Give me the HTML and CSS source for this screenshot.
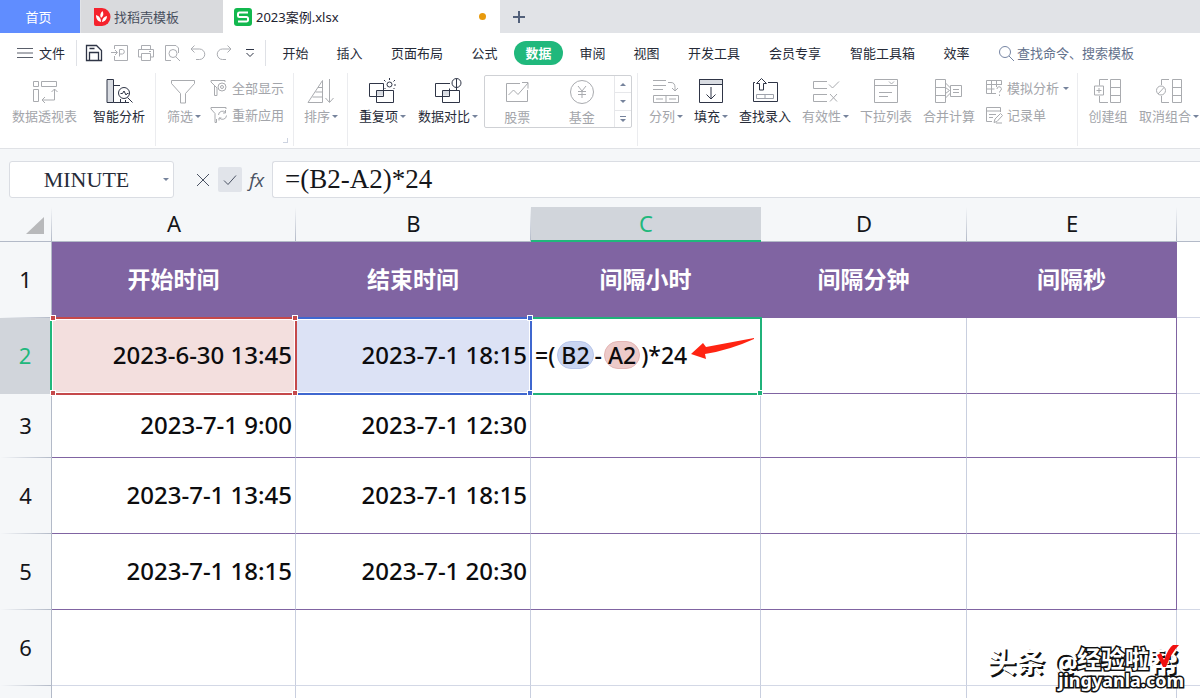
FILE: index.html
```html
<!DOCTYPE html>
<html lang="zh-CN">
<head>
<meta charset="utf-8">
<title>2023案例.xlsx</title>
<link rel="stylesheet" href="styles.css">
</head>
<body>
<div class="app">
  <nav class="tabs">
    <button class="tab tab-home">首页</button>
    <button class="tab tab-template">
      <svg width="18" height="18" viewBox="0 0 18 18"><path d="M1 0h8a8.500 9 0 0 1 0 18H3a2 2 0 0 1-2-2z" fill="#f5222d"/><path d="M8 14C4 13 3 10 3 7c3 1 5 3 5 7zM8 10C6.500 7 7.500 5 9.500 3c1.500 3 1 5-1.500 7zM9 14c0-3 2-5.500 5-6 0 3-2 5.500-5 6z" fill="#fff"/></svg>
      找稻壳模板
    </button>
    <button class="tab tab-file">
      <svg width="18" height="18" viewBox="0 0 18 18"><rect width="18" height="18" rx="3" fill="#12b84e"/><path d="M14 4.500H5.500a1.500 1.500 0 0 0-1.500 1.500v1.500A1.500 1.500 0 0 0 5.500 9h7A1.500 1.500 0 0 1 14 10.500V12a1.500 1.500 0 0 1-1.500 1.500H4" fill="none" stroke="#fff" stroke-width="2"/></svg>
      <span class="tab-name">2023案例.xlsx</span>
      <span class="unsaved"></span>
    </button>
    <button class="new-tab" aria-label="新建"><svg width="14" height="14" viewBox="0 0 14 14"><path d="M7 1v12M1 7h12" stroke="#52607a" stroke-width="2"/></svg></button>
  </nav>

  <div class="menu">
    <button class="file-menu"><svg width="16" height="12" viewBox="0 0 16 12"><path d="M0 1.500h16M0 6h16M0 10.500h16" stroke="#5a5f6a"/></svg>文件</button>
    <div class="quick">
      <button aria-label="保存"><svg class="dark" width="18" height="18" viewBox="0 0 18 18"><path d="M1.500 16.500v-15h10l5 5v10zM4.500 16.500V8.500h9v8M4.500 4.500h5" stroke-width="1.300"/></svg></button>
      <button aria-label="输出为PDF"><svg width="18" height="18" viewBox="0 0 18 18"><path d="M3.500 5V1.500h13v15h-13V12M0 8.500h6M4 6l2.500 2.500L4 11M8.500 12.500v-7h3a2.300 2.300 0 0 1 0 4.500H8.500"/></svg></button>
      <button aria-label="打印"><svg width="18" height="18" viewBox="0 0 18 18"><path d="M4.500 5.500v-4h9v4M4.500 13H1.500V5.500h15V13h-3M4.500 9.500h9v7h-9zM12 7.500h2"/></svg></button>
      <button aria-label="打印预览"><svg width="18" height="18" viewBox="0 0 18 18"><path d="M8 16.500H2.500v-15H13l2.500 2.500v5M13 13l4 4"/><circle cx="10" cy="9.500" r="4"/></svg></button>
      <button aria-label="撤销"><svg width="18" height="18" viewBox="0 0 18 18"><path d="M5.500 1.500L2 5l3.500 3.500M2 5h8.500a5.200 5.200 0 0 1 0 10.500H7"/></svg></button>
      <button aria-label="恢复"><svg width="18" height="18" viewBox="0 0 18 18"><path d="M12.500 1.500L16 5l-3.500 3.500M16 5H7.500a5.200 5.200 0 0 0 0 10.500H11"/></svg></button>
      <button aria-label="更多"><svg class="dark" width="18" height="18" viewBox="0 0 18 18"><path d="M5 5.500h8M5.500 9L9 12.500 12.500 9"/></svg></button>
    </div>
    <div class="menu-items">
      <button class="c2">开始</button><button class="c2">插入</button><button class="c4">页面布局</button><button class="c2">公式</button><button class="c2 active">数据</button><button class="c2">审阅</button><button class="c2">视图</button><button class="c4">开发工具</button><button class="c4">会员专享</button><button class="c5">智能工具箱</button><button class="c2">效率</button>
    </div>
    <button class="search"><svg width="17" height="17" viewBox="0 0 17 17"><circle cx="7" cy="7" r="5.500"/><path d="M11 11l5 5"/></svg>查找命令、搜索模板</button>
  </div>

  <div class="ribbon">
    <div class="group g-first">
      <button class="tool c5 off"><svg width="28" height="28" viewBox="0 0 28 28"><path d="M2.500 4.500h5v5h-5zM10.500 4.500h15v5h-15zM2.500 12.500h5v12h-5zM23.500 12v11H11M20.500 15l3-3 3 3M14 20l-3 3 3 3"/></svg><span>数据透视表</span></button>
      <button class="tool c4"><svg width="28" height="28" viewBox="0 0 28 28"><path d="M2 2.500h6.500v23H2z" fill="#d9dce2"/><path d="M8.500 8.500H15M8.500 25.500H24M15.500 22v3.500M20.500 23v2.500M22.500 20.500l5 5M15.500 16.500h2l1.500-2.500 2 4 1-1.500h1.500"/><circle cx="19" cy="16" r="5.500"/></svg><span>智能分析</span></button>
    </div>
    <div class="group g-filter">
      <button class="tool t2 off"><svg width="28" height="28" viewBox="0 0 28 28"><path d="M1.500 3.500h23v3l-9 10v9.500h-5v-9.500l-9-10z"/></svg><span>筛选<i class="caret"></i></span></button>
      <div class="stack">
        <button class="small off"><svg width="18" height="18" viewBox="0 0 18 18"><path d="M7 16.500V9L1 3V1.500h14V3M7 16.500H4.500V6.500"/><circle cx="12" cy="8" r="4"/><circle cx="12" cy="8" r="1.500"/></svg>全部显示</button>
        <button class="small off"><svg width="18" height="18" viewBox="0 0 18 18"><path d="M6.500 16.500V13M1 3V1.500h15V3M1 3l4 4.500v9h1.500M8.500 9a4 4 0 0 1 7-2.500M16.500 9.500a4 4 0 0 1-7 2.500M15.500 4v3H13M9 14.500V12h2.500"/></svg>重新应用</button>
      </div>
      <span class="launcher"></span>
    </div>
    <div class="group g-sort">
      <button class="tool t2 off"><svg width="28" height="28" viewBox="0 0 28 28"><path d="M1 25.500L15.500 3.500v22zM11 10.500h4.500M8.500 15h7M5.500 20h10M22.500 2v23M18.500 21l4 4.500 4-4.500"/></svg><span>排序<i class="caret"></i></span></button>
    </div>
    <div class="group g-data">
      <button class="tool t3"><svg width="28" height="28" viewBox="0 0 28 28"><path d="M7.500 13.500h7v5h-7z" fill="#d9dce2" stroke="none"/><path d="M.5 6.500h14v13H.5zM7.500 13.500h17v12h-17z"/><circle cx="20.500" cy="7.500" r="2.500"/><path d="M20.500 1v2M15 3l1.500 1.500M26 3l-1.500 1.500M25 8h2M15.500 12l1-1M25.500 12l-1-1"/></svg><span>重复项<i class="caret"></i></span></button>
      <button class="tool t4"><svg width="28" height="28" viewBox="0 0 28 28"><path d="M8.500 13.500h7v5h-7z" fill="#d9dce2" stroke="none"/><path d="M16 6.500H1.500v13h14v-8M8.500 13.500h17v12h-17zM22.500 1.500v11M22.500 13v-2"/><circle cx="22.500" cy="6" r="4.500"/></svg><span>数据对比<i class="caret"></i></span></button>
      <div class="gallery">
        <button class="tool off"><svg width="28" height="28" viewBox="0 0 28 28"><path d="M17 5.500H3.500v18h21V12M5.500 17l5-5 4.500 4.500L25 5M19 4.500h6v6"/></svg><span>股票</span></button>
        <button class="tool off"><svg width="28" height="28" viewBox="0 0 28 28"><circle cx="14" cy="14" r="11.500"/><path d="M10 8l4 5 4-5M14 13v7M10 13.500h8M10 16.500h8"/></svg><span>基金</span></button>
        <div class="gallery-nav"><button aria-label="上一行"><i class="caret up"></i></button><button aria-label="下一行"><i class="caret"></i></button><button class="more" aria-label="展开"><i class="caret"></i></button></div>
      </div>
    </div>
    <div class="group g-tools">
      <button class="tool t2 off"><svg width="28" height="28" viewBox="0 0 28 28"><path d="M1 3.500h13M1 8.500h13M1 12.500h10M16 5.500h3q4 0 4 5v3M20 11l3 3 3-3M1.500 18.500h25v7h-25zM14 18.500v7M4 22h7M17 22h7"/></svg><span>分列<i class="caret"></i></span></button>
      <button class="tool t2"><svg width="28" height="28" viewBox="0 0 28 28"><path d="M2.500 2.500h23v5h-23z" fill="#d9dce2"/><path d="M2.500 2.500h23v23h-23zM14 10v12M9.500 17.500L14 22l4.500-4.500"/></svg><span>填充<i class="caret"></i></span></button>
      <button class="tool c4"><svg width="28" height="28" viewBox="0 0 28 28"><path d="M4 5.500H2.500v19h24v-19H17"/><path d="M8.500 13V6.500H5.500L10.500 1.500l5 5h-3V13z"/><path d="M5.500 17.500h17v4h-17zM14 17.500v4" stroke="#9ea2ab"/></svg><span>查找录入</span></button>
      <button class="tool t3 off"><svg width="28" height="28" viewBox="0 0 28 28"><path d="M15 4.500H1.500v7H15M15 17.500H1.500v7H15M17 7.500l3.500 3.500L27 4.500M18 17l7 7.500M25 17l-7 7.500"/></svg><span>有效性<i class="caret"></i></span></button>
      <button class="tool c4 off"><svg width="28" height="28" viewBox="0 0 28 28"><path d="M2.500 2.500h23v23h-23zM2.500 8.500h23M17 4.500l2.500 2.500L22 4.500M7 15.500h13M7 19.500h9"/></svg><span>下拉列表</span></button>
      <button class="tool c4 off"><svg width="28" height="28" viewBox="0 0 28 28"><path d="M.5 2.500h10v23H.5zM.5 10.500h10M.5 18.500h10M10.500 6l5 5M10.500 21l5-5M10.500 10.500l4 3-4 3M15.500 8.500h11v11h-11zM18 12.500h6M18 15.500h6"/></svg><span>合并计算</span></button>
      <div class="stack stack-wide">
        <button class="small off"><svg width="18" height="18" viewBox="0 0 18 18"><path d="M11 14.500H1.500v-13h15V6M1.500 5.500h15M1.500 10h8M6.500 1.500v13M11.500 1.500V8M12 10a2.200 2.200 0 1 1 3 2l-.5 1.500M14.500 15.500v1.500"/></svg>模拟分析<i class="caret"></i></button>
        <button class="small off"><svg width="18" height="18" viewBox="0 0 18 18"><path d="M7 15.500H1.500v-14h14V6M1.500 5h14M4 8.500h7M4 11.500h4M9 16.500l1-3.500L15.500 7.500l2 2L12 15.500zM11 17h6"/></svg>记录单</button>
      </div>
    </div>
    <div class="group g-outline">
      <button class="tool c3 off"><svg width="28" height="28" viewBox="0 0 28 28"><path d="M14 2.500H5.500v6M5.500 19v6.500H14M.5 9h9v9h-9zM5 11v5M2.500 13.500h5M16.500 2.500h10v23h-10zM16.500 10.500h10M16.500 18.500h10"/></svg><span>创建组</span></button>
      <button class="tool t4 off"><svg width="28" height="28" viewBox="0 0 28 28"><path d="M14 2.500H6.500v5.500M6.500 19v6.500H14M3 17l6-6.500M17.500 2.500h9v23h-9zM17.500 10.500h9M17.500 18.500h9"/><circle cx="6" cy="13.500" r="4.500"/></svg><span>取消组合<i class="caret"></i></span></button>
    </div>
  </div>

  <div class="formula-bar">
    <div class="name-box"><input type="text" value="MINUTE" aria-label="名称框"><button aria-label="名称列表"><i class="caret"></i></button></div>
    <div class="formula-actions">
      <button aria-label="取消"><svg width="14" height="14" viewBox="0 0 14 14"><path d="M1 1l12 12M13 1L1 13"/></svg></button>
      <button class="confirm" aria-label="输入"><svg width="14" height="14" viewBox="0 0 14 14"><path d="M1 7.500L5 11.500 13 2.500"/></svg></button>
      <button class="fx" aria-label="插入函数">fx</button>
    </div>
    <input class="formula" type="text" value="=(B2-A2)*24" aria-label="编辑栏">
  </div>

  <main class="sheet">
    <table>
      <colgroup><col class="col-n"><col class="col-a"><col class="col-b"><col class="col-c"><col class="col-d"><col class="col-e"><col></colgroup>
      <thead>
        <tr><th class="corner"><svg width="18" height="17" viewBox="0 0 18 17"><path d="M18 0v17H0z" fill="#b8b9bb"/></svg></th><th>A</th><th>B</th><th class="current">C</th><th>D</th><th>E</th><th></th></tr>
      </thead>
      <tbody>
        <tr class="title"><th>1</th><td>开始时间</td><td>结束时间</td><td>间隔小时</td><td>间隔分钟</td><td>间隔秒</td><td></td></tr>
        <tr><th class="current">2</th><td class="ref ref-a">2023-6-30 13:45<div class="frame frame-a"><i></i><i></i><i></i><i></i></div></td><td class="ref ref-b">2023-7-1 18:15<div class="frame frame-b"><i></i><i></i></div></td><td class="ref editing"><span>=(</span><span class="chip chip-b">B2</span><span>-</span><span class="chip chip-a">A2</span><span>)*24</span>
          <svg class="arrow" width="64" height="24" viewBox="0 0 64 24"><path d="M63 1L15 10l-3-4L0 17l15 5-1-5q25-4 49-15z" fill="#ff2412"/></svg>
          <div class="frame frame-c"><i></i></div></td><td></td><td></td><td></td></tr>
        <tr class="short"><th>3</th><td>2023-7-1 9:00</td><td>2023-7-1 12:30</td><td></td><td></td><td></td><td></td></tr>
        <tr><th>4</th><td>2023-7-1 13:45</td><td>2023-7-1 18:15</td><td></td><td></td><td></td><td></td></tr>
        <tr><th>5</th><td>2023-7-1 18:15</td><td>2023-7-1 20:30</td><td></td><td></td><td></td><td></td></tr>
        <tr class="plain"><th>6</th><td></td><td></td><td></td><td></td><td></td><td></td></tr>
        <tr class="plain"><th></th><td></td><td></td><td></td><td></td><td></td><td></td></tr>
      </tbody>
    </table>
    <div class="watermark">
      <span class="mark-author">头条 @</span><span class="mark-tail">帮</span>
      <span class="mark-site">经验啦</span>
      <svg class="mark-check" width="24" height="24" viewBox="0 0 24 24"><path d="M1 11l4-2 3 7Q13 3 17 1h6Q15 9 10 23H7z" fill="#f01010"/></svg>
      <span class="mark-url">jingyanla.com</span>
    </div>
  </main>
</div>
</body>
</html>
```

FILE: styles.css
```css
* { box-sizing: border-box; }
body { margin: 0; font: 13px/18px "Noto Sans", "Noto Sans CJK SC", sans-serif; color: #262b38; background: #f5f7f9; }
button { font: inherit; color: inherit; background: none; border: 0; padding: 0; white-space: nowrap; }
input { font: inherit; color: inherit; border: 0; outline: 0; min-width: 0; background: none; padding: 0; }
svg { display: block; flex: none; fill: none; }
.app { display: flex; flex-direction: column; height: 100vh; overflow: hidden; }

/* document tabs */
.tabs { display: flex; flex: none; height: 33px; background: #e1e3e7; }
.tab { display: flex; align-items: center; gap: 3px; }
.tab-home { width: 80px; padding-right: 3px; justify-content: center; color: #fff; background: #608dff; margin-right: 1px; }
.tab-template { width: 142px; padding-left: 12px; color: #484f5e; background: #d9dadd; }
.tab-file { width: 277px; padding: 0 14px 0 11px; gap: 4px; background: #fff; color: #1d2230; }
.unsaved { width: 7px; height: 7px; border-radius: 50%; background: #e89a0c; margin-left: auto; }
.new-tab { padding: 0 12px; }

/* menu row */
.menu { display: flex; flex: none; align-items: center; height: 40px; padding-left: 17px; background: #fff; }
.file-menu { display: flex; align-items: center; gap: 6px; width: 59px; }
.quick { display: flex; gap: 8px; padding: 4px 6px 4px 8px; border-left: 1px solid #dfe1e6; border-right: 1px solid #dfe1e6; }
.quick svg { stroke: #abadb2; }
.quick svg.dark { stroke: #2f3546; }
.menu-items { display: flex; gap: 27px; align-items: center; padding-left: 16px; }
.c2 { width: 27px; }
.c3 { width: 40px; }
.c4 { width: 54px; }
.c5 { width: 67px; }
.t2 { width: 36px; }
.t3 { width: 49px; }
.t4 { width: 62px; }
.menu .active { width: 49px; height: 24px; margin: 0 -11px; border-radius: 12px; color: #fff; font-weight: 700; background: #20b87c; }
.search { display: flex; align-items: center; gap: 2px; margin-left: 28px; color: #63718c; }
.search svg { stroke: #7685a3; }

/* ribbon */
.ribbon { display: flex; flex: none; height: 76px; overflow: hidden; background: #fff; border-bottom: 1px solid #e0e2e6; }
.group { position: relative; display: flex; flex: none; gap: 10px; border-right: 1px solid #ebecef; padding: 0 8px 0 10px; margin-bottom: 2px; }
.g-first { gap: 14px; padding-left: 11px; padding-right: 9px; }
.g-filter { gap: 8px; }
.g-sort { padding-left: 9px; }
.g-data { padding-right: 5px; }
.g-tools { gap: 9px; }
.g-outline { border-right: 0; padding-right: 0; }
.tool { display: flex; flex: none; flex-direction: column; align-items: center; justify-content: flex-start; gap: 2px; padding-top: 4px; }
.tool svg, .small svg { stroke: #2f3546; }
.tool span { display: flex; align-items: center; gap: 2px; }
.off { color: #a3a5aa; }
.off svg { stroke: #a9abaf; }
.caret { display: block; flex: none; width: 6px; border: 3px solid transparent; border-top-color: #76839c; border-bottom: 0; }
.caret.up { border-top: 0; border-bottom: 3px solid #76839c; }
.stack { display: flex; flex-direction: column; gap: 9px; width: 75px; padding-top: 6px; }
.stack-wide { width: 84px; }
.small { display: flex; align-items: center; gap: 4px; }
.launcher { position: absolute; right: 5px; bottom: 3px; width: 5px; height: 5px; border: solid #cdd3e0; border-width: 0 1px 1px 0; }
.gallery { display: flex; width: 148px; height: 53px; margin: 2px 0 0 -5px; border: 1px solid #cfd1d5; border-radius: 2px; overflow: hidden; }
.gallery .tool { flex: 1; padding-top: 2px; }
.gallery-nav { display: flex; flex-direction: column; width: 17px; border-left: 1px solid #e6e7ea; }
.gallery-nav button { flex: 1; display: flex; align-items: center; justify-content: center; border-bottom: 1px solid #e6e7ea; }
.gallery-nav .more { flex-direction: column; gap: 2px; border: 0; }
.more::before { content: ""; width: 6px; height: 1px; background: #76839c; }

/* formula bar */
.formula-bar { display: flex; flex: none; height: 58px; padding: 12px 0 9px 9px; font-family: "Liberation Serif", serif; }
.name-box { display: flex; align-items: center; width: 165px; background: #fff; border: 1px solid #dadde3; border-radius: 3px; }
.name-box input { flex: 1; font-size: 22px; text-align: center; }
.name-box button { width: 10px; }
.formula-actions { display: flex; align-items: center; gap: 2px; width: 98px; padding: 0 3px 0 17px; }
.formula-actions button { display: flex; align-items: center; justify-content: center; width: 25px; height: 25px; }
.formula-actions svg { stroke: #4a5263; }
.formula-actions .confirm { background: #e1e4ea; border-radius: 2px; }
.formula-actions .fx { font: italic 19px/24px "Open Sans", sans-serif; color: #4a5263; }
.formula { flex: 1; padding-left: 12px; font-size: 27px; background: #fff; border: 1px solid #dadde3; border-right: 0; border-radius: 3px 0 0 3px; color: #15161a; }

/* sheet */
.sheet { position: relative; flex: 1; overflow: hidden; }
table { width: 100%; table-layout: fixed; border-collapse: separate; border-spacing: 0; }
.col-n { width: 52px; }
.col-a { width: 244px; }
.col-b { width: 235px; }
.col-c { width: 230px; }
.col-d { width: 206px; }
.col-e { width: 210px; }
th { padding: 0 0 2px; font-size: 22px; line-height: 30px; font-weight: 400; color: #15161a; }
thead th { height: 35px; border-bottom: 1px solid #b3bac8; background: linear-gradient(to top, #b3bac8, #f5f7f9) right / 1px 100% no-repeat; }
thead th:last-child { background: none; }
thead .current { color: #20b87c; background: #d1d5db; border-bottom: 2px solid #20b87c; }
.corner svg { margin: 4px 0 0 26px; }
tbody th { height: 76px; border-right: 1px solid #b3bac8; background: linear-gradient(to left, #b3bac8, #f5f7f9) bottom / 100% 1px no-repeat; }
tbody th.current { color: #20b87c; background: #d1d5db; border-right: 2px solid #20b87c; }
td { padding: 0 3px 2px 0; font-size: 24px; line-height: 32px; font-weight: 500; text-align: right; color: #0c0c0e; background: #fff; border-right: 1px solid #c9cfdf; border-bottom: 1px solid #8064a2; }
td:nth-child(6) { border-right-color: #8064a2; }
td:last-child, .plain td { border-bottom-color: #d3d8e6; }
.plain td:nth-child(6) { border-right-color: #c9cfdf; }
td:last-child { border-right: 0; }
.title td:not(:last-child) { padding: 0 0 2px; font-size: 23px; text-align: center; font-weight: 700; color: #fff; background: #8064a2; border-color: #8064a2; }
.short th { height: 64px; }
.ref { position: relative; }
.ref-a { background: #f3dfde; }
.ref-b { background: #dce2f5; }
.editing { padding-left: 4px; text-align: left; white-space: nowrap; font-size: 23px; }
.chip { display: inline-block; padding: 0 3px; margin: 0 1px 0 2px; line-height: 26px; border: 1px solid; border-radius: 14px; }
.chip-a { background: #edcac9; border-color: #e4b5b4; }
.chip-b { background: #cad5f1; border-color: #b8c6ea; }
.arrow { position: absolute; left: 160px; top: 19px; }
.frame { position: absolute; inset: -1px -2px -2px 0; border: 2px solid; border-left: 0; z-index: 1; }
.frame-a { color: #c5494b; box-shadow: inset 0 0 0 1px #fff; z-index: 3; }
.frame-b { color: #3f67cf; box-shadow: inset 0 0 0 1px #fff; z-index: 2; }
.frame-c { color: #20b27a; }
.frame i { position: absolute; width: 6px; height: 6px; right: -3px; bottom: -3px; background: currentColor; border: 1px solid #fff; }
.frame i:nth-child(2) { bottom: auto; top: -4px; }
.frame i:nth-child(3) { right: auto; left: -2px; }
.frame i:nth-child(4) { right: auto; left: -2px; bottom: auto; top: -4px; }

/* watermark */
.watermark { position: absolute; right: 14px; bottom: 4px; width: 200px; height: 52px; font-weight: 700; white-space: nowrap; }
.watermark > * { position: absolute; }
.mark-author, .mark-tail { top: 2px; font-size: 29px; line-height: 36px; color: #fff; text-shadow: 2px 2px 0 #111; }
.mark-author { left: 1px; }
.mark-tail { right: 8px; }
.mark-site, .mark-url { color: #fff; -webkit-text-stroke: 3px #111; paint-order: stroke fill; }
.mark-site { left: 91px; top: 2px; font-size: 24px; line-height: 30px; }
.mark-check { right: 6px; top: 2px; }
.mark-url { right: 2px; top: 27px; font-size: 18px; line-height: 22px; }
```
